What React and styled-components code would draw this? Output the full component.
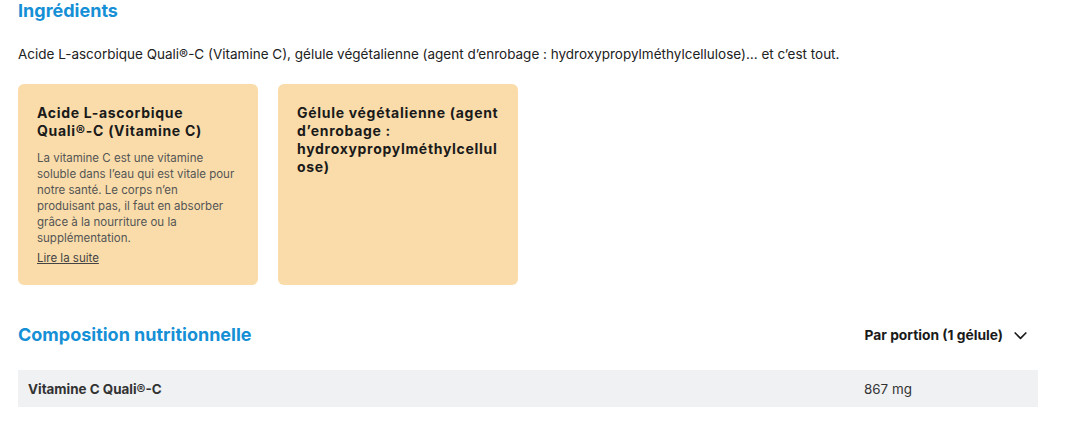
import React from 'react';
import styled, { createGlobalStyle } from 'styled-components';

const GlobalStyle = createGlobalStyle`
  body {
    margin: 0;
    background: #fff;
    font-family: "Inter", "Liberation Sans", sans-serif;
    color: #1f1f1f;
  }
`;

const Page = styled.div`
  width: 1020px;
  padding: 0 18px;
`;

const SectionTitle = styled.h2`
  margin: 0;
  font-size: 18px;
  font-weight: 700;
  color: #1590d6;
  line-height: 22px;
`;

const Intro = styled.p`
  margin: 22px 0 0;
  font-size: 13.5px;
  line-height: 20px;
  color: #222;
`;

const Cards = styled.div`
  display: flex;
  gap: 20px;
  margin-top: 20px;
`;

const Card = styled.div`
  width: 240px;
  height: 201px;
  box-sizing: border-box;
  padding: 20px 19px;
  background: #f9dcaa;
  border-radius: 6px;
`;

const CardTitle = styled.h3`
  margin: 0;
  font-size: 14px;
  font-weight: 700;
  letter-spacing: 0.7px;
  line-height: 18px;
  color: #1a1a1a;
  overflow-wrap: anywhere;
`;

const NoWrap = styled.span`
  white-space: nowrap;
`;

const CardText = styled.p`
  margin: 10px 0 0;
  font-size: 11.5px;
  line-height: 16px;
  color: #555;
`;

const ReadMore = styled.a`
  display: inline-block;
  margin-top: 1px;
  font-size: 11.5px;
  line-height: 16px;
  color: #444;
  text-decoration: underline;
`;

const NutriHeader = styled.div`
  display: flex;
  justify-content: space-between;
  align-items: center;
  margin-top: 39px;
  padding-right: 9px;
`;

const Portion = styled.button`
  display: flex;
  align-items: center;
  gap: 9px;
  border: 0;
  background: none;
  padding: 0;
  font-family: inherit;
  font-size: 13.8px;
  font-weight: 700;
  color: #1a1a1a;
`;

const Table = styled.div`
  margin-top: 24px;
`;

const Row = styled.div`
  display: grid;
  grid-template-columns: 836px 1fr;
  align-items: center;
  height: 37px;
  padding: 0 10px;
  background: #f0f1f3;
`;

const Cell = styled.span`
  font-size: 13.4px;
  font-weight: ${(p) => (p.$bold ? 700 : 400)};
  color: #333;
`;

export default function App() {
  return (
    <Page>
      <GlobalStyle />
      <SectionTitle>Ingrédients</SectionTitle>
      <Intro>
        Acide L-ascorbique Quali®-C (Vitamine C), gélule végétalienne (agent d’enrobage : hydroxypropylméthylcellulose)… et c’est tout.
      </Intro>
      <Cards>
        <Card>
          <CardTitle>
            Acide L-ascorbique <NoWrap>Quali®-C</NoWrap> (Vitamine C)
          </CardTitle>
          <CardText>
            La vitamine C est une vitamine soluble dans l’eau qui est vitale pour notre santé. Le corps n’en
            <br />
            produisant pas, il faut en absorber grâce à la nourriture ou la supplémentation.
          </CardText>
          <ReadMore href="#">Lire la suite</ReadMore>
        </Card>
        <Card>
          <CardTitle>Gélule végétalienne (agent d’enrobage : hydroxypropylméthylcellulose)</CardTitle>
        </Card>
      </Cards>
      <NutriHeader>
        <SectionTitle>Composition nutritionnelle</SectionTitle>
        <Portion>
          Par portion (1 gélule)
          <svg width="17" height="17" viewBox="0 0 24 24" fill="none" stroke="#1a1a1a" strokeWidth="2.4" strokeLinecap="round" strokeLinejoin="round">
            <path d="M4.5 8.5l7.5 7.5 7.5-7.5" />
          </svg>
        </Portion>
      </NutriHeader>
      <Table>
        <Row>
          <Cell $bold>Vitamine C Quali®-C</Cell>
          <Cell>867 mg</Cell>
        </Row>
      </Table>
    </Page>
  );
}
